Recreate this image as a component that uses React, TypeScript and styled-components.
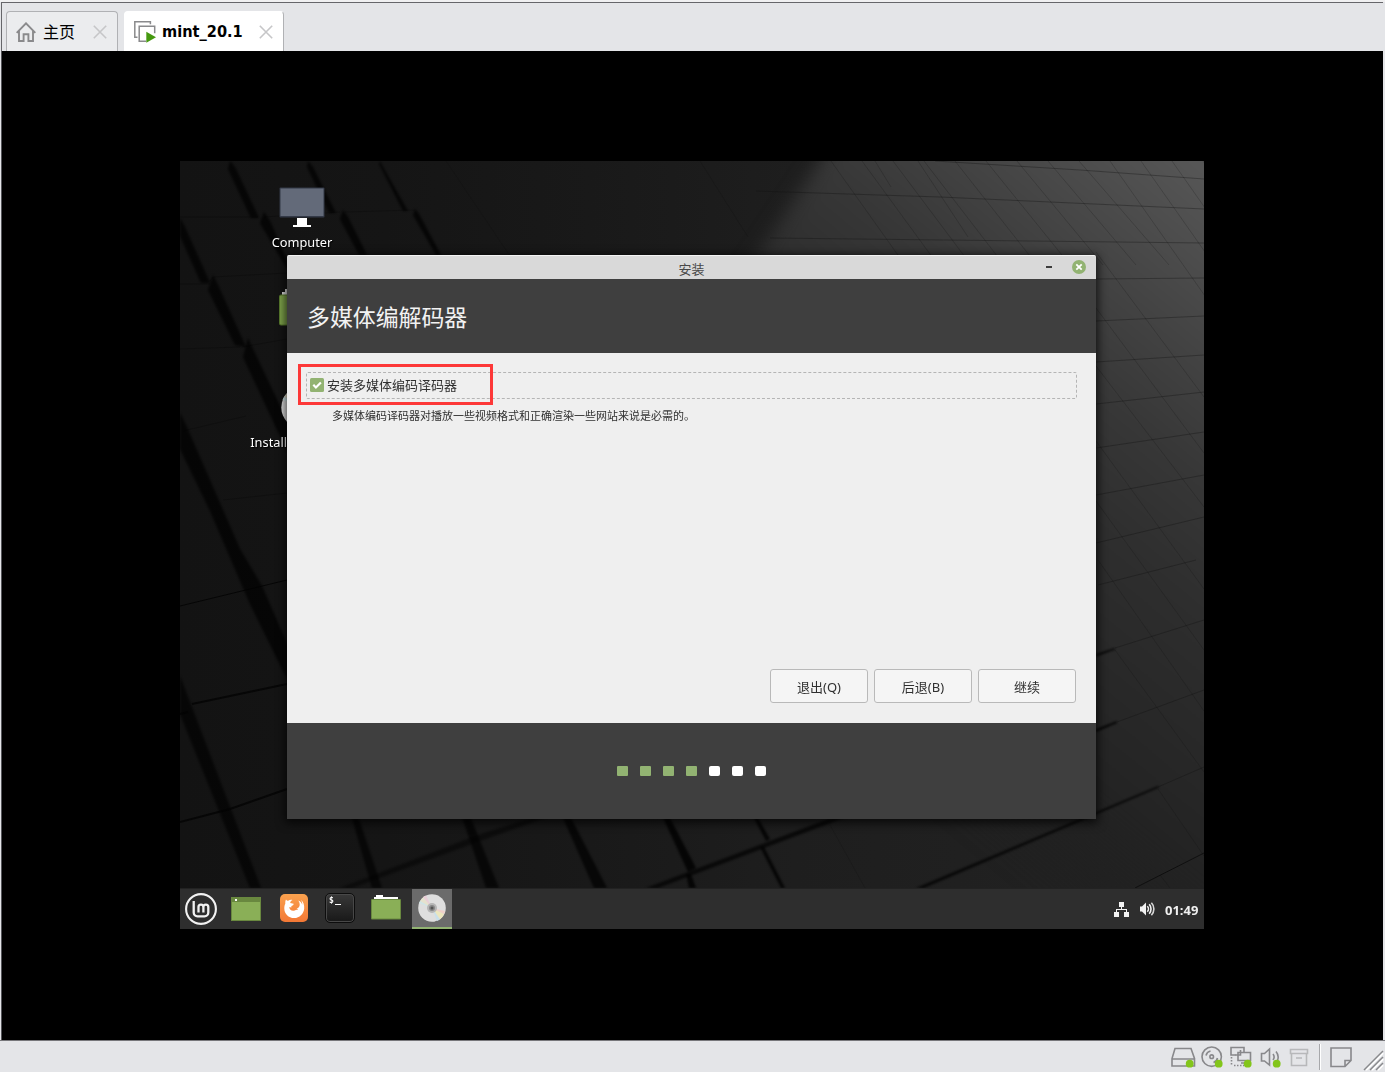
import React from "react";
import styled, { createGlobalStyle } from "styled-components";

const uiFont = `"Noto Sans", "Noto Sans CJK SC", sans-serif`;

const GlobalStyle = createGlobalStyle`
  * { box-sizing: border-box; }
  body { margin: 0; background: #e4e5e8; overflow: hidden; }
  svg { display: block; flex: none; }
`;

const HostWindow = styled.div`
  width: 1385px;
  height: 1072px;
  display: flex;
  flex-direction: column;
  background: #e4e5e8;
  border-top: 2px solid #f0f0f1;
  font-family: ${uiFont};
`;

const TabBar = styled.div`
  height: 49px;
  flex: none;
  display: flex;
  align-items: flex-end;
  gap: 6px;
  margin: 0 2px 0 1px;
  padding-left: 4px;
  border-top: 1px solid #66666a;
  border-left: 1px solid #66666a;
`;

const Tab = styled.div<{ $active?: boolean; $width: number }>`
  width: ${(p) => p.$width}px;
  height: 40px;
  display: flex;
  align-items: center;
  padding: 0 10px 0 9px;
  border: 1px solid ${(p) => (p.$active ? "#fff" : "#b0b1b4")};
  border-right-color: #b0b1b4;
  border-bottom: 0;
  border-radius: 4px 4px 0 0;
  background: ${(p) => (p.$active ? "#fff" : "#ebecee")};
`;

const TabLabel = styled.span<{ $bold?: boolean }>`
  flex: 1;
  margin-left: ${(p) => (p.$bold ? "6px" : "7px")};
  font-family: ${(p) => (p.$bold ? `"DejaVu Sans Condensed", "DejaVu Sans", sans-serif` : uiFont)};
  font-stretch: ${(p) => (p.$bold ? "condensed" : "normal")};
  font-size: ${(p) => (p.$bold ? "16.2px" : "16px")};
  line-height: 24px;
  font-weight: ${(p) => (p.$bold ? 700 : 400)};
  color: #000;
  white-space: nowrap;
`;

const Screen = styled.div`
  flex: 1;
  display: flex;
  justify-content: center;
  align-items: flex-start;
  margin: 0 2px 0 1px;
  padding: 110px 0 0 0;
  border-left: 1px solid #55555a;
  background: #000;
`;

const Desktop = styled.div`
  position: relative;
  width: 1024px;
  height: 768px;
  margin-right: 1px;
  overflow: hidden;
  display: flex;
  flex-direction: column;
  background: #151515;
`;

const WallpaperArt = styled.svg`
  position: absolute;
  inset: 0;
`;

const DesktopArea = styled.div`
  position: relative;
  flex: 1;
`;

const Launcher = styled.div<{ $x: number; $y: number }>`
  position: absolute;
  left: ${(p) => p.$x}px;
  top: ${(p) => p.$y}px;
  width: 120px;
  display: flex;
  flex-direction: column;
  align-items: center;
`;

const LauncherLabel = styled.span`
  margin-top: 4px;
  color: #fff;
  font-size: 12.8px;
  line-height: 18px;
  white-space: nowrap;
  text-shadow: 1px 1px 1px #000;
`;

const Installer = styled.section`
  position: absolute;
  left: 107px;
  top: 94px;
  width: 809px;
  height: 564px;
  display: flex;
  flex-direction: column;
  border-radius: 2px 2px 0 0;
  box-shadow: 0 2px 10px 2px rgba(0, 0, 0, 0.7);
  color: #303030;
`;

const TitleBar = styled.header`
  height: 24px;
  flex: none;
  display: grid;
  grid-template-columns: 70px 1fr 70px;
  grid-template-rows: 23px;
  background: #d9d9d9;
  border-top: 1px solid #f4f4f4;
  border-radius: 2px 2px 0 0;
`;

const TitleText = styled.span`
  grid-column: 2;
  padding-top: 4px;
  text-align: center;
  font-size: 13px;
  line-height: 19px;
  color: #484848;
`;

const WindowControls = styled.div`
  height: 22px;
  display: flex;
  align-items: center;
  gap: 20px;
  padding-left: 20px;
`;

const Minimize = styled.i`
  width: 6px;
  height: 2px;
  background: #3c3c3c;
`;

const Heading = styled.h1`
  height: 74px;
  flex: none;
  margin: 0;
  padding: 0 0 1px 20px;
  display: flex;
  align-items: center;
  background: #3f3f3f;
  color: #f2f2f2;
  font-size: 22.9px;
  font-weight: 400;
`;

const Content = styled.main`
  height: 370px;
  flex: none;
  display: flex;
  flex-direction: column;
  padding: 19px 19px 20px;
  background: #efefef;
`;

const OptionRow = styled.label`
  height: 27px;
  display: flex;
  align-items: center;
  gap: 3px;
  padding: 0 0 1px 3px;
  border: 1px dashed #b5b5b5;
  border-radius: 2px;
  font-size: 13px;
  line-height: 20px;
`;

const Hint = styled.p`
  margin: 8px 0 0 26px;
  font-size: 11px;
  line-height: 18px;
`;

const Marker = styled.div`
  position: absolute;
  left: 11px;
  top: 109px;
  width: 195px;
  height: 41px;
  border: 3px solid #fd3838;
`;

const Actions = styled.div`
  margin-top: auto;
  margin-right: 1px;
  display: flex;
  justify-content: flex-end;
  gap: 6px;
`;

const ActionButton = styled.button`
  width: 98px;
  height: 34px;
  padding: 1px 0 0;
  border: 1px solid #b9b9b9;
  border-radius: 3px;
  background: #f5f5f5;
  color: #303030;
  font: 13px/20px ${uiFont};
`;

const Footer = styled.footer`
  height: 96px;
  flex: none;
  display: flex;
  align-items: center;
  justify-content: center;
  gap: 12px;
  background: #3f3f3f;
`;

const Step = styled.i<{ $done: boolean }>`
  width: 11px;
  height: 10px;
  border-radius: ${(p) => (p.$done ? "1px" : "2px")};
  background: ${(p) => (p.$done ? "#92b372" : "#fff")};
`;

const Panel = styled.nav`
  position: relative;
  height: 41px;
  flex: none;
  display: flex;
  border-top: 1px solid #222;
  background: #2e2e2e;
`;

const PanelItem = styled.div<{ $width: number; $active?: boolean; $raise?: number }>`
  width: ${(p) => p.$width}px;
  display: flex;
  justify-content: center;
  align-items: center;
  margin-left: ${(p) => (p.$active ? "2px" : "0")};
  padding-bottom: ${(p) => p.$raise ?? 0}px;
  background: ${(p) => (p.$active ? "#6b6b6b" : "transparent")};
  border-bottom: ${(p) => (p.$active ? "2px solid #92b372" : "0")};
`;

const Tray = styled.div`
  margin-left: auto;
  display: flex;
  align-items: center;
  padding-right: 5px;
`;

const Clock = styled.time`
  width: 34px;
  margin-left: 10px;
  padding-top: 1px;
  color: #f0f0f0;
  font-family: "Open Sans", "Noto Sans", sans-serif;
  font-size: 13px;
  font-weight: 700;
  line-height: 20px;
  white-space: nowrap;
`;

const StatusBar = styled.footer`
  height: 32px;
  flex: none;
  display: flex;
  justify-content: flex-end;
  align-items: stretch;
  border-top: 1px solid #77777b;
  background: #e4e5e8;
`;

const Separator = styled.i`
  width: 2px;
  height: 26px;
  margin: 3px 9px 0 5px;
  border-left: 1px solid #a7a8ab;
  border-right: 1px solid #fff;
`;

const CloseMark = () => (
  <svg width="14" height="14" viewBox="0 0 14 14" stroke="#c6c6c8" strokeWidth="1.6">
    <path d="M.8.8 13.2 13.2M13.2.8.8 13.2" />
  </svg>
);

const HomeIcon = () => (
  <svg width="20" height="20" viewBox="0 0 20 20" fill="none" stroke="#8a8a8c" strokeWidth="1.9">
    <path d="M.7 10.8 10 1.3l9.3 9.5M3 9v10h4.6v-6.8h4.8V19H17V9" />
  </svg>
);

const MachineIcon = () => (
  <svg width="22" height="22" viewBox="0 0 22 22" fill="none">
    <path d="M3.5 16.2H.8V.8h15.6v2.4" stroke="#8a8a8c" strokeWidth="1.5" />
    <path d="M12 20.2H5.2V5.3h15.5v7" stroke="#8a8a8c" strokeWidth="1.5" />
    <path d="M12.3 10.8 22 16.3l-9.7 5.5Z" fill="#45990f" />
  </svg>
);

type Sliver = [string, number];

// Deep shadows between the raised blocks, as filled slivers.
const shadows: Sliver[] = [
  ["50,0 55,6 79,57 71,57 48,8", 0.8],
  ["128,0 133,6 156,52 149,52 127,6", 0.8],
  ["200,0 203,6 228,50 223,50 199,3", 0.8],
  ["84,51 90,60 111,108 107,108 80,62", 0.8],
  ["163,49 168,56 187,94 179,94 160,58", 0.8],
  ["235,48 239,53 261,94 256,94 233,54", 0.8],
  ["0,57 5,66 30,122 21,122 0,75", 0.8],
  ["33,114 38,124 66,186 55,184 28,129", 0.8],
  ["68,177 73,188 112,270 107,290 63,196", 0.8],
  ["0,252 6,264 60,388 82,425 109,487 109,522 70,443 30,350 0,288", 0.8],
  ["0,515 81,727 70,727 0,553", 0.75],
  ["170,650 178,655 202,727 192,727", 0.75],
  ["280,650 290,655 319,727 306,727", 0.75],
  ["380,650 390,655 427,727 414,727", 0.8],
  ["480,650 489,655 516,707 508,711", 0.9],
  ["573,655 578,657 590,678 586,680", 0.9],
  ["506,713 511,713 516,727 509,727", 0.9],
  ["580,686 584,686 605,727 601,727", 0.9],
  ["160,727 298,674 360,654 370,655 300,680 172,727", 0.55],
  ["466,727 656,655 669,655 478,727", 0.75],
  ["736,727 978,625 979,626.5 744,727", 0.85],
  ["916,493 935,487 935,488.5 916,495.5", 0.9],
  ["916,568 937,560 937,562 916,571", 0.9],
];

const seams: { d: string; width: number; opacity: number }[] = [
  { d: "M0 445 107 419", width: 1, opacity: 0.8 },
  { d: "M12 543 107 523M0 553 8 551", width: 2, opacity: 0.75 },
  { d: "M0 661 50 648 107 628", width: 2, opacity: 0.75 },
  { d: "M955 727 1024 692", width: 1, opacity: 0.6 },
  {
    d: "M0 56H78M84 56 160 51M165 51 235 49M30 120 33 116 107 112M62 186 107 178M0 123 30 123M0 188 60 186M3 270 66 255M43 339 107 332",
    width: 1,
    opacity: 0.22,
  },
];

const rightSeams =
  "M576 30 760 36 1024 48M755 0 900 9 1024 18M590 77 1024 82M916 118 1024 117M916 160 1024 155M916 201 1024 194M916 243 1024 231M916 287 1024 271M916 334 1024 314M916 382 1024 356M918 424 1016 399M935 487 1024 459M937 561 1024 529M978 626 1024 606";

const upperDiagonals = Array.from(
  { length: 13 },
  (_, i) => `M${651 + i * 31} 0l${i < 9 ? 74 + i * 2 : 380} ${i < 9 ? 104 : 540}`,
).join("");

const sideDiagonals =
  "M916 91 1024 236M916 147 1024 292M916 205 1024 346M916 280 1024 428M916 340 1024 489M918 399 1024 550M935 489 1024 611M978 628 1024 695M980 714 990 727M650 664 685 727M695 0 711 26M738 0 788 76M266 0 330 95M520 0 568 76";

const Wallpaper = () => (
  <WallpaperArt width="1024" height="768" viewBox="0 0 1024 768" fill="none">
    <defs>
      <linearGradient id="base" x1="0" y1="0" x2="1" y2="0">
        <stop offset="0" stopColor="#131313" />
        <stop offset=".2" stopColor="#151515" />
        <stop offset=".4" stopColor="#191919" />
        <stop offset=".6" stopColor="#1e1e1e" />
        <stop offset="1" stopColor="#232323" />
      </linearGradient>
      <linearGradient id="glow" gradientUnits="userSpaceOnUse" x1="1024" y1="0" x2="560" y2="560">
        <stop offset="0" stopColor="#575757" />
        <stop offset=".2" stopColor="#444" />
        <stop offset=".34" stopColor="#373737" />
        <stop offset=".48" stopColor="#2e2e2e" />
        <stop offset=".76" stopColor="#232323" />
        <stop offset=".92" stopColor="#1f1f1f" stopOpacity="0" />
      </linearGradient>
      <filter id="soft" x="-10%" y="-10%" width="120%" height="120%" colorInterpolationFilters="sRGB">
        <feGaussianBlur stdDeviation="9" />
      </filter>
      <filter id="crease" colorInterpolationFilters="sRGB">
        <feGaussianBlur stdDeviation=".8" />
      </filter>
    </defs>
    <rect width="1024" height="768" fill="url(#base)" />
    <path d="M660-30 567 110 480 800H1070V-30Z" fill="url(#glow)" filter="url(#soft)" />
    <g filter="url(#crease)" fill="#030303">
      {shadows.map(([points, opacity]) => (
        <polygon key={points} points={points} opacity={opacity} />
      ))}
    </g>
    {seams.map((s) => (
      <path key={s.d} d={s.d} stroke="#030303" strokeWidth={s.width} opacity={s.opacity} />
    ))}
    <path d={rightSeams} stroke="#111" strokeWidth="1" opacity=".35" />
    <path d={upperDiagonals + sideDiagonals} stroke="#111" strokeWidth=".8" opacity=".25" />
  </WallpaperArt>
);

const ComputerIcon = () => (
  <svg width="46" height="42" viewBox="0 0 46 42">
    <rect x=".5" y=".5" width="45" height="30" rx="1" fill="#333947" />
    <rect x="1.5" y="1.5" width="43" height="27.5" fill="#636a79" />
    <path d="M18 31h10v7h4v2H14v-2h4Z" fill="#fff" />
  </svg>
);

const HomeFolderIcon = () => (
  <svg width="46" height="38" viewBox="0 0 46 38">
    <path d="M3 7V4h3V1h14v4h20v3H3Z" fill="#ddd" />
    <rect x=".5" y="7" width="45" height="30" rx="1.5" fill="#7ea34a" stroke="#587a2d" />
  </svg>
);

const Disc = ({ size }: { size: number }) => (
  <svg width={size} height={size} viewBox="0 0 28 28">
    <circle cx="14" cy="14" r="13.8" fill="#dedede" />
    <path d="M14 14 2 7A14 14 0 0 1 7 2Z" fill="#e5e2ce" />
    <path d="M14 14 1 9 2 7Z" fill="#cfe5e6" />
    <path d="M14 14 5 3 8 1.5Z" fill="#e9ced8" />
    <path d="M14 14 26 20A14 14 0 0 1 22 25.4Z" fill="#ece6bd" />
    <path d="M14 14 27 17 26 20Z" fill="#efcfc9" />
    <path d="M14 14 22 25.4 19 27Z" fill="#c9dfe9" />
    <circle cx="14" cy="14" r="5" fill="#b5b5b5" />
    <circle cx="14" cy="14" r="3" fill="#888" />
    <circle cx="14" cy="14" r="1.5" fill="#555" />
  </svg>
);

const CloseButton = () => (
  <svg width="14" height="14" viewBox="0 0 14 14">
    <circle cx="7" cy="7" r="7" fill="#92b372" />
    <path d="m4.3 4.3 5.4 5.4m0-5.4-5.4 5.4" stroke="#fff" strokeWidth="1.8" />
  </svg>
);

const CheckedBox = () => (
  <svg width="14" height="14" viewBox="0 0 14 14">
    <rect width="14" height="14" rx="1.5" fill="#92b372" />
    <path d="m3.3 6.8 2.6 2.7 5-5" fill="none" stroke="#fff" strokeWidth="2.2" />
  </svg>
);

const MintLogo = () => (
  <svg width="32" height="32" viewBox="0 0 32 32" fill="none" stroke="#f2f2f2">
    <circle cx="16" cy="16" r="14.9" strokeWidth="2.1" />
    <path
      d="M8.7 8v11.5a3.8 3.8 0 0 0 3.8 3.8h7a3.8 3.8 0 0 0 3.8-3.8V14a2.45 2.45 0 0 0-4.9 0v5.5M18.400 19.5V14a2.45 2.45 0 0 0-4.900 0v5.5"
      strokeWidth="2.3"
    />
  </svg>
);

const DesktopIcon = () => (
  <svg width="30" height="24" viewBox="0 0 30 24">
    <rect width="30" height="24" fill="#69883f" />
    <path d="M1 5h28v18H1Z" fill="#8aaf57" />
    <rect x="4" y="2" width="2" height="2" fill="#fff" />
  </svg>
);

const FirefoxIcon = () => (
  <svg width="28" height="28" viewBox="0 0 28 28">
    <defs>
      <linearGradient id="fx" x2="0" y2="1">
        <stop stopColor="#faa24e" />
        <stop offset="1" stopColor="#f37835" />
      </linearGradient>
    </defs>
    <rect width="28" height="28" rx="5" fill="url(#fx)" />
    <path
      d="M6 5.5c.6 1 1.3 1.3 2.2 1.3 1.3-1 2.7-1.2 4.3-.8-1.3.7-2.2 1.7-2.3 3l3.4.7c.2.9-.4 1.4-2.2 2.2l-.1 1.5-2-.4c0 2.5 2 4 4.2 3.8 2 0 2.8-1.2 4.6-1.2-.5-.8-1-.9-1.6-1 2-.5 3.2-1.8 3.2-3.8 0-2.2-.8-3.5-1.5-4.3 2.5.8 3.6 2.6 4 4.2.2-1.6-.3-3.5-1.2-5 2.300 2 3.5 5.2 3.2 8.8-.5 5.5-4.7 9.6-10 9.6-5.7 0-9.900-4.3-9.900-9.600 0-1.800.2-3.300 1-4.700-.1-1.500 0-3 .7-4.300Z"
      fill="#fff"
    />
  </svg>
);

const TerminalFrame = styled.div`
  width: 30px;
  height: 30px;
  padding: 2px 0 0 3px;
  border: 1px solid #0d0d0d;
  border-radius: 5px;
  box-shadow: inset 0 0 0 1px #484848;
  background: linear-gradient(#383838, #181818);
  color: #fff;
  font: 700 8px/10px "DejaVu Sans Mono", monospace;
`;

const Cursor = styled.i`
  display: inline-block;
  width: 6px;
  height: 1px;
  margin-left: 1px;
  vertical-align: -2px;
  background: #fff;
`;

const FolderIcon = () => (
  <svg width="30" height="25" viewBox="0 0 30 25">
    <path d="M3 5V2h2V0h7v2h15v3Z" fill="#fff" />
    <rect y="4" width="30" height="20.5" rx="1" fill="#69883f" />
    <rect x="1" y="5" width="28" height="18.5" fill="#8aaf57" />
  </svg>
);

const NetworkIcon = () => (
  <svg width="15" height="15" viewBox="0 0 15 15" fill="#f2f2f2">
    <path d="M5 0h5v5H8v2h5v3h2v5h-5v-5h2V8H3v2h2v5H0v-5h2V7h5V5H5Z" />
  </svg>
);

const VolumeIcon = () => (
  <svg width="15" height="14" viewBox="0 0 15 14">
    <path d="M0 4.5h2L6 .5v13L2 9.5H0Z" fill="#f2f2f2" />
    <g fill="none" stroke="#f2f2f2" strokeWidth="1.6">
      <path d="M7.3 4.2a4 4 0 0 1 0 5.600M9.2 2.3a7 7 0 0 1 0 9.400" />
      <path d="M11.4.8a9 9 0 0 1 0 12.4" opacity=".85" />
    </g>
  </svg>
);

const TrayGap = styled.i`
  width: 11px;
`;

const StatusIcon = ({
  children,
  color = "#88888b",
  dot = 20.7,
}: {
  children: React.ReactNode;
  color?: string;
  dot?: number | null;
}) => (
  <svg width="29" height="31" viewBox="0 0 29 31" fill="none" stroke={color} strokeWidth="1.6">
    {children}
    {dot !== null && <circle cx={dot} cy="22.7" r="3.9" fill="#83c51b" stroke="none" />}
  </svg>
);

const NoteIcon = () => (
  <svg width="32" height="31" viewBox="0 0 32 31" fill="none" stroke="#88888b" strokeWidth="1.6">
    <path d="M1 7h20v12.5L15 25.5H1ZM21 19.5h-6v6" />
  </svg>
);

const ResizeGrip = () => (
  <svg width="23" height="31" viewBox="0 0 23 31" fill="none">
    <path d="M4 29 21 12M10 29l11-11M16 29l5-5" stroke="#fff" strokeWidth="2" />
    <path d="M2 29 21 10M8 29l13-13M14 29l7-7" stroke="#88898c" strokeWidth="1.5" />
  </svg>
);

export default function App() {
  return (
    <HostWindow>
      <GlobalStyle />
      <TabBar>
        <Tab $width={112}>
          <HomeIcon />
          <TabLabel>主页</TabLabel>
          <CloseMark />
        </Tab>
        <Tab $width={160} $active>
          <MachineIcon />
          <TabLabel $bold>mint_20.1</TabLabel>
          <CloseMark />
        </Tab>
      </TabBar>

      <Screen>
        <Desktop>
          <Wallpaper />
          <DesktopArea>
            <Launcher $x={62} $y={26}>
              <ComputerIcon />
              <LauncherLabel>Computer</LauncherLabel>
            </Launcher>
            <Launcher $x={62} $y={127}>
              <HomeFolderIcon />
            </Launcher>
            <Launcher $x={62} $y={225}>
              <Disc size={43} />
              <LauncherLabel>Install Linux Mint</LauncherLabel>
            </Launcher>

            <Installer>
              <TitleBar>
                <TitleText>安装</TitleText>
                <WindowControls>
                  <Minimize />
                  <CloseButton />
                </WindowControls>
              </TitleBar>
              <Heading>多媒体编解码器</Heading>
              <Content>
                <OptionRow>
                  <CheckedBox />
                  <span>安装多媒体编码译码器</span>
                </OptionRow>
                <Hint>多媒体编码译码器对播放一些视频格式和正确渲染一些网站来说是必需的。</Hint>
                <Actions>
                  <ActionButton>退出(Q)</ActionButton>
                  <ActionButton>后退(B)</ActionButton>
                  <ActionButton>继续</ActionButton>
                </Actions>
              </Content>
              <Footer>
                {[0, 1, 2, 3, 4, 5, 6].map((n) => (
                  <Step key={n} $done={n < 4} />
                ))}
              </Footer>
              <Marker />
            </Installer>
          </DesktopArea>

          <Panel>
            <PanelItem $width={42}><MintLogo /></PanelItem>
            <PanelItem $width={48}><DesktopIcon /></PanelItem>
            <PanelItem $width={48} $raise={2}><FirefoxIcon /></PanelItem>
            <PanelItem $width={44} $raise={2}><TerminalFrame>$<Cursor /></TerminalFrame></PanelItem>
            <PanelItem $width={48} $raise={3}><FolderIcon /></PanelItem>
            <PanelItem $width={40} $active><Disc size={28} /></PanelItem>
            <Tray>
              <NetworkIcon />
              <TrayGap />
              <VolumeIcon />
              <Clock>01:49</Clock>
            </Tray>
          </Panel>
        </Desktop>
      </Screen>

      <StatusBar>
        <StatusIcon>
          <path d="M6 7.5h16l3.5 10V25H3v-7.5ZM3 18h22" />
        </StatusIcon>
        <StatusIcon>
          <circle cx="13.7" cy="15.7" r="9.7" />
          <circle cx="13.7" cy="15.7" r="1.8" />
          <path d="M8 14.5a6 6 0 0 1 4.5-4.5M19.5 17a6 6 0 0 1-4 4.5" />
        </StatusIcon>
        <StatusIcon>
          <path d="M9 14H4V6.5h13V11M11 11.5h12.5v8H11ZM14 22h6" />
          <path d="M4.5 16v9M7 24.5h10" strokeDasharray="1.5 1.5" />
          <path d="M13.500 9v5h-5" />
        </StatusIcon>
        <StatusIcon>
          <path d="M5.5 12.5H8.5l5-4.5v16l-5-4H5.5ZM17 13a5 5 0 0 1 0 6M20 10.5a9 9 0 0 1 1.5 9" />
        </StatusIcon>
        <StatusIcon color="#b7b8ba" dot={null}>
          <path d="M5.5 8.5h17v4h-17ZM6.5 12.5v12h15v-12M11 17h6" />
        </StatusIcon>
        <Separator />
        <NoteIcon />
        <ResizeGrip />
      </StatusBar>
    </HostWindow>
  );
}
